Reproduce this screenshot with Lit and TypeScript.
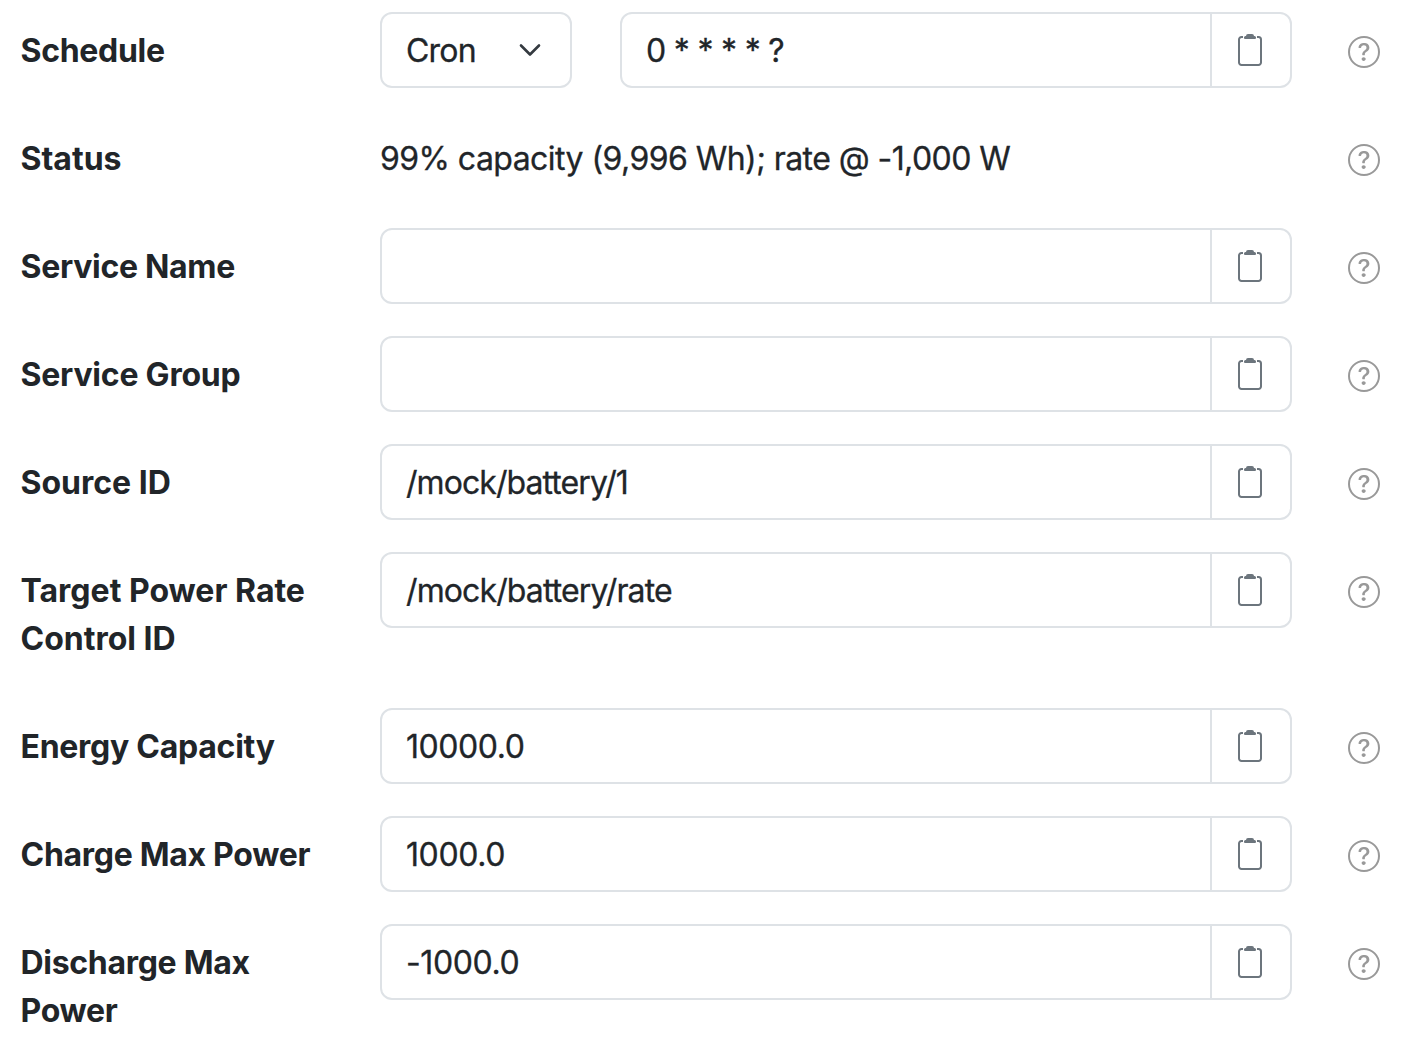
import { LitElement, html, css, nothing } from "lit";
import { customElement } from "lit/decorators.js";
import { styleMap } from "lit/directives/style-map.js";

interface Setting {
  label: string;
  /** Letter spacing of the label, in px. */
  labelTracking: number;
  /** Letter spacing of the value or text, in px. */
  tracking: number;
  value?: string;
  text?: string;
  cron?: boolean;
}

const SETTINGS: Setting[] = [
  { label: "Schedule", labelTracking: -0.3, value: "0 * * * * ?", tracking: -0.7, cron: true },
  { label: "Status", labelTracking: 0, text: "99% capacity (9,996 Wh); rate @ -1,000 W", tracking: -0.56 },
  { label: "Service Name", labelTracking: -0.3, value: "", tracking: 0 },
  { label: "Service Group", labelTracking: -0.22, value: "", tracking: 0 },
  { label: "Source ID", labelTracking: 0, value: "/mock/battery/1", tracking: -0.93 },
  { label: "Target Power Rate Control ID", labelTracking: 0, value: "/mock/battery/rate", tracking: -0.88 },
  { label: "Energy Capacity", labelTracking: -0.27, value: "10000.0", tracking: -0.45 },
  { label: "Charge Max Power", labelTracking: -0.29, value: "1000.0", tracking: -0.4 },
  { label: "Discharge Max Power", labelTracking: -0.3, value: "-1000.0", tracking: -0.4 },
];

const chevron = html`<svg width="24" height="24" viewBox="0 0 16 16" fill="none" stroke="#343a40" stroke-width="1.750" stroke-linecap="round" stroke-linejoin="round">
  <path d="m2 5 6 6 6-6" />
</svg>`;

const clipboard = html`<svg width="24" height="32" viewBox="0 0 24 32">
  <path d="M5 3H3.500A2.500 2.500 0 0 0 1 5.500V28.500A2.500 2.500 0 0 0 3.500 31H20.500A2.500 2.500 0 0 0 23 28.500V5.500A2.500 2.500 0 0 0 20.500 3H19" fill="none" stroke="#6c757d" stroke-width="2" />
  <path d="M7 5Q6 5 6 4V3.500Q6 2 7.500 2H8Q8 0 10 0H14Q16 0 16 2H16.500Q18 2 18 3.500V4Q18 5 17 5Z" fill="#6c757d" />
</svg>`;

const question = html`<svg width="32" height="32" viewBox="0 0 16 16" fill="currentColor">
  <circle cx="8" cy="8" r="7.500" fill="none" stroke="currentColor" />
  <path d="M5.255 5.786a.237.237 0 0 0 .241.247h.825c.138 0 .248-.113.266-.25.09-.656.54-1.134 1.342-1.134.686 0 1.314.343 1.314 1.168 0 .635-.374.927-.965 1.371-.673.489-1.206 1.060-1.168 1.987l.003.217a.25.25 0 0 0 .25.246h.811a.25.25 0 0 0 .25-.25v-.105c0-.718.273-.927 1.010-1.486.609-.463 1.244-.977 1.244-2.056 0-1.511-1.276-2.241-2.673-2.241-1.267 0-2.655.59-2.750 2.286m1.557 5.763c0 .533.425.927 1.010.927.609 0 1.028-.394 1.028-.927 0-.552-.42-.94-1.029-.94-.584 0-1.009.388-1.009.94" />
</svg>`;

const spacing = (px: number) => styleMap({ letterSpacing: `${px}px` });

@customElement("app-root")
export class AppRoot extends LitElement {
  static styles = css`
    :host {
      display: block;
      box-sizing: border-box;
      height: 1052px;
      overflow: hidden;
      background: #fff;
      color: #212529;
      font: 400 32px/48px Inter, "Liberation Sans", sans-serif;
      padding: 12px 40px 0 20px;
    }
    * {
      box-sizing: border-box;
    }
    .row {
      display: grid;
      grid-template-columns: 312px 912px 32px;
      column-gap: 48px;
      align-items: start;
      margin-bottom: 32px;
      min-height: 76px;
    }
    .label {
      font-weight: 700;
      padding: 15px 0 13px 0.5px;
    }
    .text,
    .choice,
    .value {
      -webkit-text-stroke: 0.3px #212529;
    }
    .text {
      padding-top: 15px;
      white-space: nowrap;
    }
    .controls {
      display: flex;
      gap: 48px;
    }
    .select {
      width: 192px;
      height: 76px;
      border: 2px solid #dee2e6;
      border-radius: 12px;
      padding: 0 28px 0 24px;
      display: flex;
      align-items: center;
      justify-content: space-between;
    }
    .choice {
      padding-top: 2px;
      letter-spacing: -0.8px;
    }
    .group {
      flex: 1;
      height: 76px;
      border: 2px solid #dee2e6;
      border-radius: 12px;
      display: flex;
    }
    .value {
      flex: 1;
      padding: 13px 24px 11px;
      white-space: pre;
    }
    .copy {
      width: 80px;
      border-left: 2px solid #dee2e6;
      padding-right: 2px;
      display: flex;
      align-items: center;
      justify-content: center;
    }
    .help {
      padding-top: 24px;
      margin-left: 8px;
      color: #999;
    }
    svg {
      display: block;
    }
  `;

  private row(s: Setting) {
    return html`<div class="row">
      <div class="label" style=${spacing(s.labelTracking)}>${s.label}</div>
      ${s.text
        ? html`<div class="text" style=${spacing(s.tracking)}>${s.text}</div>`
        : html`<div class="controls">
            ${s.cron ? html`<div class="select"><span class="choice">Cron</span>${chevron}</div>` : nothing}
            <div class="group">
              <div class="value" style=${spacing(s.tracking)}>${s.value}</div>
              <div class="copy">${clipboard}</div>
            </div>
          </div>`}
      <div class="help">${question}</div>
    </div>`;
  }

  render() {
    return html`${SETTINGS.map((s) => this.row(s))}`;
  }
}
